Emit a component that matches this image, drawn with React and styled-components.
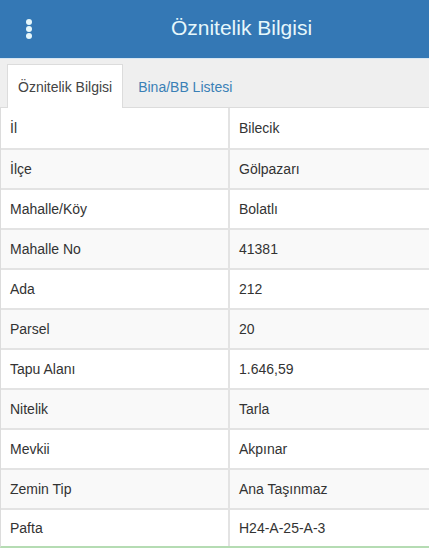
import React from 'react';
import styled, { createGlobalStyle } from 'styled-components';

const GlobalStyle = createGlobalStyle`
	html, body {
		margin: 0;
		padding: 0;
		background: #fff;
	}
	body {
		font-family: "Liberation Sans", Arial, sans-serif;
		color: #333;
	}
`;

const Page = styled.div`
	width: 429px;
	height: 548px;
	overflow: hidden;
	display: flex;
	flex-direction: column;
`;

const Header = styled.header`
	height: 58px;
	flex-shrink: 0;
	background: #3478b5;
	display: flex;
	align-items: center;
	border-bottom: 1px solid #d6e6f2;
`;

const MenuButton = styled.div`
	width: 54px;
	height: 58px;
	display: flex;
	align-items: center;
	justify-content: center;
	flex-shrink: 0;
	padding-left: 4px;
	box-sizing: border-box;
`;

const Title = styled.h1`
	flex: 1;
	margin: 0;
	text-align: center;
	font-size: 21px;
	font-weight: normal;
	color: #e6f7fb;
	padding-bottom: 2px;
`;

const TabBar = styled.nav`
	height: 48px;
	flex-shrink: 0;
	background: #efefef;
	display: flex;
	align-items: flex-end;
	padding-left: 7px;
	border-bottom: 1px solid #dcdcdc;
`;

const Tab = styled.div`
	height: 44px;
	display: flex;
	align-items: center;
	box-sizing: border-box;
	font-size: 14px;
	padding: 0 ${p => (p.$active ? '10px' : '14px')};
	color: ${p => (p.$active ? '#444' : '#3a80b6')};
	background: ${p => (p.$active ? '#fff' : 'transparent')};
	border: 1px solid ${p => (p.$active ? '#dcdcdc' : 'transparent')};
	border-bottom: none;
	margin-bottom: -1px;
	position: relative;
`;

const Table = styled.div`
	flex: 1;
	min-height: 0;
	display: flex;
	flex-direction: column;
	border-left: 1px solid #dcdcdc;
	border-bottom: 2px solid #b5dcb3;
`;

const Row = styled.div`
	display: grid;
	grid-template-columns: 227px 1fr;
	height: 40px;
	flex-shrink: 0;
	box-sizing: border-box;
	border-top: ${p => (p.$first ? 'none' : '2px solid #e3e3e3')};
	background: ${p => (p.$striped ? '#f9f9f9' : '#fff')};

	&:last-child {
		height: auto;
		flex: 1;
	}
`;

const Cell = styled.div`
	display: flex;
	align-items: center;
	padding-left: 9px;
	font-size: 14px;
	color: #333;
	& + & {
		border-left: 2px solid #e3e3e3;
	}
`;

const KebabIcon = () => (
	<svg width="8" height="22" viewBox="0 0 8 22">
		<circle cx="4" cy="4" r="3" fill="#e6f7fb" />
		<circle cx="4" cy="11" r="3" fill="#e6f7fb" />
		<circle cx="4" cy="18" r="3" fill="#e6f7fb" />
	</svg>
);

const rows = [
	['İl', 'Bilecik'],
	['İlçe', 'Gölpazarı'],
	['Mahalle/Köy', 'Bolatlı'],
	['Mahalle No', '41381'],
	['Ada', '212'],
	['Parsel', '20'],
	['Tapu Alanı', '1.646,59'],
	['Nitelik', 'Tarla'],
	['Mevkii', 'Akpınar'],
	['Zemin Tip', 'Ana Taşınmaz'],
	['Pafta', 'H24-A-25-A-3'],
];

export default function App() {
	return (
		<Page>
			<GlobalStyle />
			<Header>
				<MenuButton>
					<KebabIcon />
				</MenuButton>
				<Title>Öznitelik Bilgisi</Title>
			</Header>
			<TabBar>
				<Tab $active>Öznitelik Bilgisi</Tab>
				<Tab>Bina/BB Listesi</Tab>
			</TabBar>
			<Table>
				{rows.map(([label, value], i) => (
					<Row key={label} $first={i === 0} $striped={i % 2 === 1}>
						<Cell>{label}</Cell>
						<Cell>{value}</Cell>
					</Row>
				))}
			</Table>
		</Page>
	);
}
